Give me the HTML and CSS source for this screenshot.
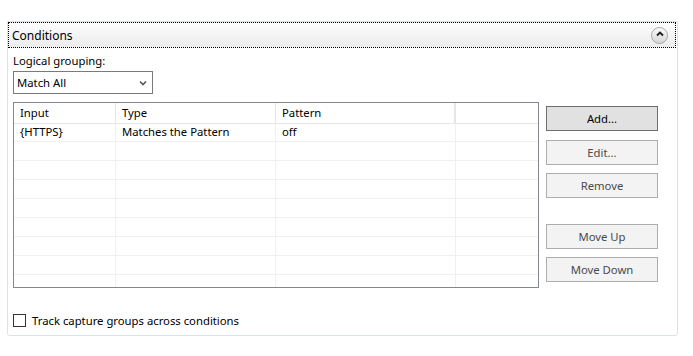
FILE: index.html
```html
<!DOCTYPE html>
<html lang="en">
<head>
    <meta charset="UTF-8">
    <title>Conditions</title>
    <link rel="stylesheet" href="styles.css">
</head>
<body>
    <div class="section">
        <div class="section-header">
            <span>Conditions</span>
            <span class="collapse-btn">
                <svg width="8" height="6" viewBox="0 0 8 6"><path d="M1 4.5 L4 1.5 L7 4.5" fill="none" stroke="#1a1a1a" stroke-width="1.8"/></svg>
            </span>
        </div>
        <div class="section-body">
            <div class="field-label">Logical grouping:</div>
            <div class="select">
                <span>Match All</span>
                <svg width="8" height="6" viewBox="0 0 8 6"><path d="M1 1.5 L4 4.5 L7 1.5" fill="none" stroke="#555" stroke-width="1.6"/></svg>
            </div>
            <div class="list-area">
                <div class="list">
                    <div class="row head">
                        <div class="cell">Input</div>
                        <div class="cell">Type</div>
                        <div class="cell">Pattern</div>
                        <div class="cell last"></div>
                    </div>
                    <div class="row">
                        <div class="cell">{HTTPS}</div>
                        <div class="cell">Matches the Pattern</div>
                        <div class="cell">off</div>
                        <div class="cell last"></div>
                    </div>
                    <div class="row"><div class="cell"></div><div class="cell"></div><div class="cell"></div><div class="cell last"></div></div>
                    <div class="row"><div class="cell"></div><div class="cell"></div><div class="cell"></div><div class="cell last"></div></div>
                    <div class="row"><div class="cell"></div><div class="cell"></div><div class="cell"></div><div class="cell last"></div></div>
                    <div class="row"><div class="cell"></div><div class="cell"></div><div class="cell"></div><div class="cell last"></div></div>
                    <div class="row"><div class="cell"></div><div class="cell"></div><div class="cell"></div><div class="cell last"></div></div>
                    <div class="row"><div class="cell"></div><div class="cell"></div><div class="cell"></div><div class="cell last"></div></div>
                    <div class="row"><div class="cell"></div><div class="cell"></div><div class="cell"></div><div class="cell last"></div></div>
                    <div class="row"><div class="cell"></div><div class="cell"></div><div class="cell"></div><div class="cell last"></div></div>
                </div>
                <div class="buttons">
                    <button class="btn default">Add...</button>
                    <button class="btn edit-btn">Edit...</button>
                    <button class="btn remove-btn">Remove</button>
                    <button class="btn up-btn">Move Up</button>
                    <button class="btn">Move Down</button>
                </div>
            </div>
            <div class="check">
                <span class="check-box"></span>
                <span>Track capture groups across conditions</span>
            </div>
        </div>
    </div>
</body>
</html>
```

FILE: styles.css
```css
body {
    margin: 0;
    background-color: #fff;
    font-family: "Segoe UI", "Noto Sans", sans-serif;
    font-size: 11.3px;
    color: #000;
}
.section {
    box-sizing: border-box;
    margin: 21px 0 0 7px;
    width: 671px;
    height: 315px;
    border: 1px solid #dbe2e8;
    border-radius: 0 0 3px 3px;
}
.section-header {
    box-sizing: border-box;
    height: 26px;
    margin-right: 1px;
    padding: 0 7px 0 3px;
    border: 1px dotted #000;
    background: linear-gradient(#fdfdfd, #ececec);
    display: flex;
    align-items: center;
    justify-content: space-between;
    font-size: 12px;
}
.collapse-btn {
    box-sizing: border-box;
    width: 17px;
    height: 17px;
    border-radius: 50%;
    border: 1px solid #a5a5a5;
    background: linear-gradient(#fafafa, #d6d6d6);
    display: flex;
    align-items: center;
    justify-content: center;
}
.collapse-btn svg {
    margin-top: -2px;
}
.section-body {
    padding: 0 5px;
}
.field-label {
    margin-top: 5px;
    height: 15px;
    line-height: 15px;
}
.select {
    box-sizing: border-box;
    margin-top: 3px;
    width: 140px;
    height: 23px;
    border: 1px solid #7a7a7a;
    padding: 0 5px 0 3px;
    display: flex;
    align-items: center;
    justify-content: space-between;
}
.list-area {
    display: flex;
    margin-top: 8px;
}
.list {
    box-sizing: border-box;
    width: 526px;
    height: 186px;
    border: 1px solid #828790;
    overflow: hidden;
}
.row {
    display: grid;
    grid-template-columns: 102px 160px 180px 1fr;
    height: 19px;
}
.row.head {
    height: 20px;
}
.cell {
    box-sizing: border-box;
    padding-left: 6px;
    border-right: 1px solid #f0f0f0;
    border-bottom: 1px solid #f0f0f0;
    line-height: 18px;
    white-space: nowrap;
}
.head .cell {
    border-color: #e5e5e5;
    line-height: 20px;
}
.cell.last {
    border-right: none;
}
.head .cell.last {
    border-left: 1px solid #e5e5e5;
    margin-left: -2px;
}
.buttons {
    display: flex;
    flex-direction: column;
    margin: 4px 0 0 7px;
}
.btn {
    box-sizing: border-box;
    width: 112px;
    height: 25px;
    margin: 0 0 9px 0;
    padding: 0;
    border: 1px solid #adadad;
    background-color: #f3f3f3;
    color: #4a4a4a;
    font-family: inherit;
    font-size: 11.3px;
}
.btn.default {
    border-color: #6f6f6f;
    background-color: #e1e1e1;
    color: #000;
    margin-bottom: 9px;
}
.edit-btn {
    margin-bottom: 8px;
}
.remove-btn {
    margin-bottom: 26px;
}
.up-btn {
    margin-bottom: 8px;
}
.check {
    display: flex;
    align-items: center;
    margin-top: 22px;
    height: 14px;
}
.check-box {
    box-sizing: border-box;
    width: 13px;
    height: 13px;
    border: 1px solid #333;
    margin-right: 6px;
}
```
